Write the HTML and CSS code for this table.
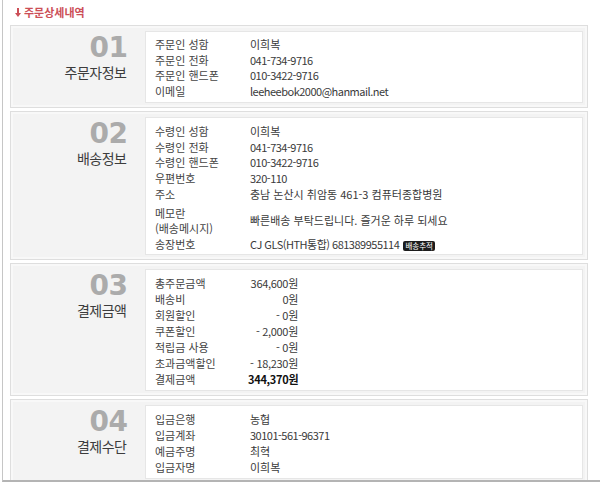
FILE: index.html
```html
<!DOCTYPE html>
<html lang="ko">
<head>
<meta charset="utf-8">
<title>주문상세내역</title>
<link rel="stylesheet" href="styles.css">
</head>
<body>
<div class="page">
  <h2 class="title"><svg class="arrow" width="6" height="9" viewBox="0 0 6 9"><path d="M2 0h2v5h2L3 9 0 5h2z" fill="#cc4f57"/></svg>주문상세내역</h2>

  <section class="box">
    <div class="head"><div class="num">01</div><div class="name">주문자정보</div></div>
    <div class="panel">
      <dl class="rows">
        <dt>주문인 성함</dt><dd>이희복</dd>
        <dt>주문인 전화</dt><dd class="en">041-734-9716</dd>
        <dt>주문인 핸드폰</dt><dd class="en">010-3422-9716</dd>
        <dt>이메일</dt><dd class="en">leeheebok2000@hanmail.net</dd>
      </dl>
    </div>
  </section>

  <section class="box">
    <div class="head"><div class="num">02</div><div class="name">배송정보</div></div>
    <div class="panel panel-2">
      <dl class="rows">
        <dt>수령인 성함</dt><dd>이희복</dd>
        <dt>수령인 전화</dt><dd class="en">041-734-9716</dd>
        <dt>수령인 핸드폰</dt><dd class="en">010-3422-9716</dd>
        <dt>우편번호</dt><dd class="en">320-110</dd>
        <dt class="addr">주소</dt><dd class="addr">충남 논산시 취암동 461-3 컴퓨터종합병원</dd>
        <dt class="memo">메모란<br>(배송메시지)</dt><dd class="memo">빠른배송 부탁드립니다. 즐거운 하루 되세요</dd>
        <dt class="ship">송장번호</dt><dd class="ship"><span class="en">CJ GLS(HTH통합) 681389955114</span> <span class="badge">배송추적</span></dd>
      </dl>
    </div>
  </section>

  <section class="box">
    <div class="head"><div class="num">03</div><div class="name">결제금액</div></div>
    <div class="panel">
      <dl class="rows money">
        <dt>총주문금액</dt><dd>364,600원</dd>
        <dt>배송비</dt><dd>0원</dd>
        <dt>회원할인</dt><dd>- 0원</dd>
        <dt>쿠폰할인</dt><dd>- 2,000원</dd>
        <dt>적립금 사용</dt><dd>- 0원</dd>
        <dt>초과금액할인</dt><dd>- 18,230원</dd>
        <dt>결제금액</dt><dd class="total">344,370원</dd>
      </dl>
    </div>
  </section>

  <section class="box">
    <div class="head"><div class="num">04</div><div class="name">결제수단</div></div>
    <div class="panel">
      <dl class="rows wide">
        <dt>입금은행</dt><dd>농협</dd>
        <dt>입금계좌</dt><dd class="en">30101-561-96371</dd>
        <dt>예금주명</dt><dd>최혁</dd>
        <dt>입금자명</dt><dd>이희복</dd>
      </dl>
    </div>
  </section>
</div>
</body>
</html>
```

FILE: styles.css
```css
html, body {
  margin: 0;
  padding: 0;
  background: #fff;
}
body {
  font-family: "Noto Sans CJK KR", sans-serif;
  font-size: 11px;
  color: #3a3a3a;
  width: 600px;
  height: 482px;
  overflow: hidden;
}
.page {
  margin-left: 2px;
  border-left: 1px solid #c6c6c6;
  border-bottom: 2px solid #b4b4b4;
  height: 480px;
  overflow: hidden;
}
.title {
  margin: 0;
  padding: 6px 0 0 12px;
  height: 25px;
  box-sizing: border-box;
  font-size: 11px;
  line-height: 13px;
  font-weight: bold;
  color: #cc4f57;
  display: flex;
  align-items: flex-start;
  gap: 3px;
}
.arrow {
  margin-top: 2px;
}
.box {
  margin: 0 12px 3px 7px;
  border: 1px solid #dedede;
  background: #f3f3f3;
  padding: 5px 4px 4px 0;
  display: flex;
  box-shadow: inset 0 0 0 2px #f8f8f8;
}
.head {
  width: 134px;
  flex: none;
  box-sizing: border-box;
  padding: 0 18px 0 0;
  text-align: right;
}
.num {
  font-family: "DejaVu Sans", sans-serif;
  font-weight: bold;
  font-size: 28px;
  line-height: 33px;
  letter-spacing: -0.5px;
  margin-right: -0.5px;
  color: #ababab;
}
.name {
  font-size: 14px;
  line-height: 16px;
  letter-spacing: -0.5px;
  margin-right: 0.5px;
  color: #3c3c3c;
}
.panel {
  flex: 1;
  background: #fff;
  border: 1px solid #e6e6e6;
  padding: 5px 10px 3px 9px;
}
.panel-2 {
  padding-top: 6px;
  padding-bottom: 2px;
}
.rows {
  margin: 0;
  display: grid;
  grid-template-columns: 95px 1fr;
  line-height: 15.5px;
}
.rows dt, .rows dd {
  margin: 0;
  white-space: nowrap;
}
.rows dt {
  color: #444;
}
.en {
  letter-spacing: -0.5px;
}
.rows .addr {
  padding-top: 1px;
}
.rows dt.memo {
  padding-top: 3px;
  line-height: 15px;
}
.rows dd.memo {
  padding-top: 3px;
  align-self: center;
}
.rows .ship {
  padding-top: 1px;
}
.badge {
  display: inline-block;
  background: #1c1c1c;
  color: #fff;
  font-size: 7.5px;
  line-height: 10px;
  padding: 0 2px;
  border-radius: 2px;
  vertical-align: 0;
  margin-left: 1px;
  letter-spacing: 0;
}
.money {
  grid-template-columns: 93px 50px;
  line-height: 16px;
}
.money dd {
  text-align: right;
  letter-spacing: -0.3px;
}
.money .total {
  font-weight: bold;
  color: #111;
}
.wide {
  line-height: 16px;
}
```
